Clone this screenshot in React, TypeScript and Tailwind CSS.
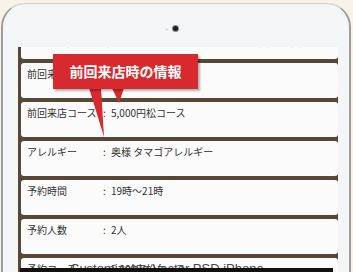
const rows = [
  { label: '前回来店日', value: '2015/10/10' },
  { label: '前回来店コース', value: '5,000円松コース' },
  { label: 'アレルギー', value: '奥様 タマゴアレルギー' },
  { label: '予約時間', value: '19時〜21時' },
  { label: '予約人数', value: '2人' },
  { label: '予約コース', value: '5,000円松コース' },
];

function InfoRow({ label, value }: { label: string; value: string }) {
  return (
    <div className="h-[35px] shrink-0 rounded-[3px] bg-[#fbfbfb] pl-[6px] pt-[4px] text-[10px] leading-[14px] text-[#333]">
      <div className="grid grid-cols-[76px_8px_1fr] whitespace-nowrap">
        <span>{label}</span>
        <span>:</span>
        <span>{value}</span>
      </div>
    </div>
  );
}

export default function App() {
  return (
    <div
      className="relative h-[272px] w-[353px] overflow-hidden bg-[#f7f3e8]"
      style={{ fontFamily: '"Noto Sans CJK JP", "Noto Sans", sans-serif' }}
    >
      {/* tablet body */}
      <div className="ml-[1px] mt-[3px] h-[300px] w-[350px] rounded-t-[24px] border-x-[2px] border-t-[1px] border-x-[#9c9c9c] border-t-[#cfcfcf] bg-[#f4f5f7] pl-[15px] pt-[43px]">
        {/* screen */}
        <div className="flex h-[260px] w-[320px] flex-col gap-[4px] overflow-hidden bg-[#564737] pl-[3px]">
          {/* clipped row above */}
          <div className="h-[12px] shrink-0 overflow-hidden rounded-b-[3px] bg-[#fbfbfb] pl-[8px]">
            <div className="-mt-[12px] flex gap-[18px] whitespace-nowrap text-[10px] leading-[14px]">
              <span className="text-[#444]">お客様名 ： 山田 花子 様</span>
              <span className="text-[#d8282d]">VIP</span>
              <span className="ml-[50px] text-[#7a6f9a]">来店回数 ３回</span>
              <span className="text-[#d8282d]">要確認</span>
            </div>
          </div>
          {rows.map((r) => (
            <InfoRow key={r.label} label={r.label} value={r.value} />
          ))}
        </div>
      </div>

      {/* camera */}
      <div className="absolute left-[165px] top-[28px] h-[3px] w-[3px] rounded-full bg-[#e2e3e5]" />
      <div className="absolute left-[173px] top-[26px] h-[5px] w-[5px] rounded-full bg-[#1f1f22] ring-1 ring-[#8a8a8a]" />

      {/* callout */}
      <svg className="absolute left-0 top-0" width="353" height="272">
        <polygon points="89,88 101,88 104,137" fill="#d8292e" />
        <polygon points="112,88 124,88 119,103" fill="#d8292e" />
      </svg>
      <div className="absolute left-[53px] top-[54px] flex h-[35px] w-[145px] items-center justify-center bg-[#d8292e] text-[14px] font-bold text-white shadow-[2px_2px_2px_rgba(0,0,0,0.3)]">
        前回来店時の情報
      </div>

      {/* watermark strip at bottom */}
      <div className="absolute left-[70px] top-[261px] whitespace-nowrap text-[13px] leading-[16px] text-[#4a4a4a]" style={{ fontFamily: '"Liberation Sans", sans-serif' }}>
        Customizable Vector PSD iPhone
      </div>
      <div className="absolute left-[20px] top-[268px] h-[4px] w-[313px] bg-[#111]" />
    </div>
  );
}
